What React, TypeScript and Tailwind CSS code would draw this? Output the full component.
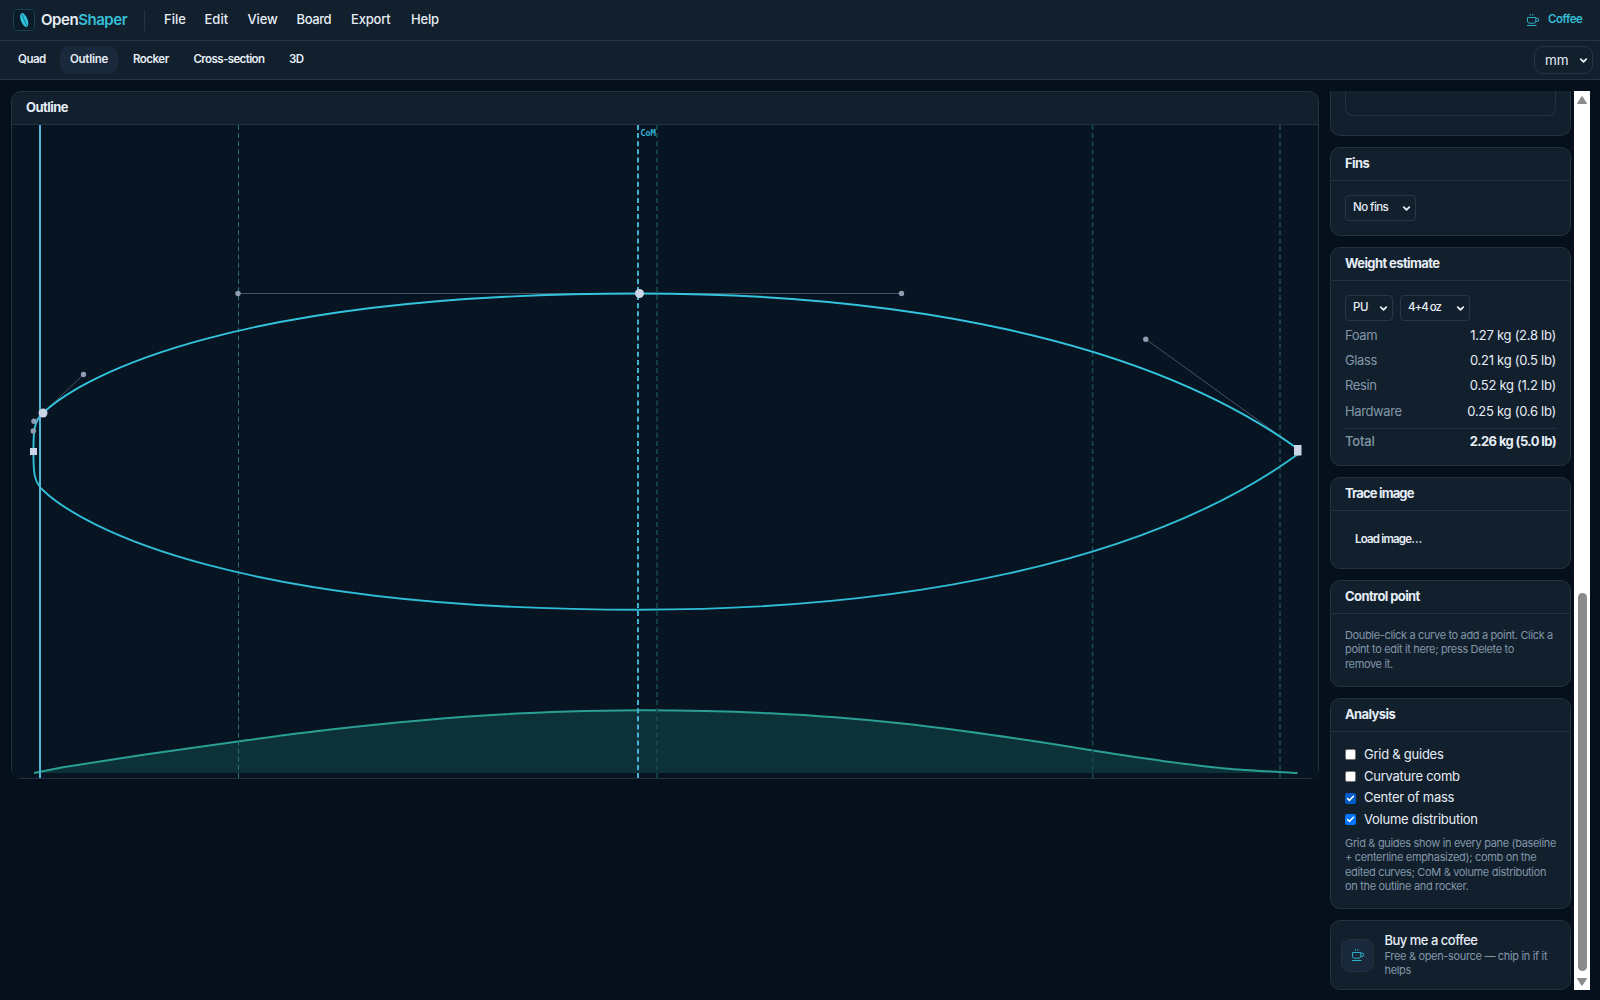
import { ReactNode } from "react";
import { ChevronDown, Check } from "lucide-react";

type Pt = [number, number];

const volume: Pt[] = [
  [34, 773], [63, 767.3], [147, 754.3], [238, 741.5], [316, 731.3], [400, 722.3], [484, 715.5],
  [568, 711.6], [640, 710.3], [705, 711], [770, 713.3], [835, 717.3], [900, 723.3], [965, 731.2],
  [1030, 740.5], [1092.7, 750.5], [1160, 760.6], [1225, 768.4], [1297.5, 773],
];

function smooth(p: Pt[]) {
  let d = `M${p[0][0]} ${p[0][1]}L${p[1][0]} ${p[1][1]}`;
  for (let i = 1; i < p.length - 1; i++) {
    const a = p[i - 1], b = p[i], c = p[i + 1], e = p[i + 2] ?? c;
    d += `C${b[0] + (c[0] - a[0]) / 6} ${b[1] + (c[1] - a[1]) / 6} ${c[0] - (e[0] - b[0]) / 6} ${c[1] - (e[1] - b[1]) / 6} ${c[0]} ${c[1]}`;
  }
  return d;
}

const volumeLine = smooth(volume);
const half = "M33.5 451.6C33.3 431 34 421 43 413C83.5 374.5 238 293.5 639.5 293.5C901.5 293.5 1145.8 339.2 1297.5 448.6";

function OutlineCanvas() {
  return (
    <svg className="block h-[653px] w-[1306px] bg-[#071421]" viewBox="12 125 1306 653" fill="none">
      <path d={volumeLine + "L34 773Z"} fill="#2dd4bf" fillOpacity="0.15" />
      <path d={volumeLine} stroke="#2a9f93" strokeWidth="2" />
      <g strokeDasharray="5 3.1">
        <path d="M238.5 125V778" stroke="#257375" />
        <path d="M657 125V778" strokeWidth="1.6" stroke="#174a4f" />
        <path d="M1092.6 125V778" strokeWidth="1.6" stroke="#174a4f" />
        <path d="M1280 125V778" strokeWidth="1.6" stroke="#1d4a51" />
      </g>
      <g stroke="#64748b" strokeOpacity="0.65">
        <path d="M238 293.5H901.5" />
        <path d="M43 413L83.5 374.5" />
        <path d="M34 421L43 413" />
        <path d="M33.5 451.6V431" />
        <path d="M1297.5 448.6L1145.8 339.2" />
      </g>
      <path d={half} stroke="#33c4de" strokeWidth="1.9" />
      <path d={half} stroke="#2fbdd6" strokeWidth="1.9" transform="matrix(1 0 0 -1 0 903.2)" />
      <path d="M40 125V778" stroke="#4fb5d2" strokeWidth="2" />
      <path d="M638 125V778" stroke="#45b3d0" strokeWidth="2" strokeDasharray="5 3.1" />
      <text x="640.3" y="136" fontSize="9" fill="#32b0cc" className="font-['DejaVu_Sans_Mono',monospace] font-bold" textLength="15.5">CoM</text>
      <g fill="#8e9db3">
        <circle cx="238" cy="293.5" r="2.7" />
        <circle cx="901.5" cy="293.5" r="2.7" />
        <circle cx="83.5" cy="374.5" r="2.7" />
        <circle cx="34" cy="421.3" r="2.7" />
        <circle cx="33.3" cy="431" r="2.7" />
        <circle cx="1145.8" cy="339.2" r="2.7" />
      </g>
      <g fill="#cbd5e5">
        <circle cx="43" cy="413" r="4.5" />
        <circle cx="639.5" cy="293.5" r="4.5" />
        <rect x="30" y="448" width="7" height="7" />
        <rect x="1294" y="445" width="7.5" height="10.5" />
      </g>
    </svg>
  );
}

function Logo() {
  return (
    <span className="flex size-[22px] items-center justify-center rounded-[5px] border border-[#15434e] bg-[#0b1b2a]">
      <svg width="16" height="16" viewBox="0 0 16 16">
        <ellipse cx="8.2" cy="8" rx="3.3" ry="7.3" fill="#2fc3dc" transform="rotate(-22 8.2 8)" />
        <path d="M5.8 2.2L10.8 14" stroke="#0b5a70" strokeWidth="0.8" />
      </svg>
    </span>
  );
}

function Cup() {
  return (
    <svg width="14" height="14" viewBox="0 0 14 14" fill="none" stroke="#2fafc6" strokeWidth="1">
      <path d="M1.5 4.5H9.8V8.2A2 2 0 0 1 7.8 10.2H3.5A2 2 0 0 1 1.5 8.2Z" />
      <path d="M9.8 5.2H11.2A1.5 1.5 0 0 1 11.2 8.4H9.8" />
      <path d="M1 12.5H10.5" />
      <path d="M4.3 1V2.6M6.8 1V2.6" />
    </svg>
  );
}

function Card({ title, className, tracking = "tracking-[-0.6px]", children }: { title: string; className: string; tracking?: string; children: ReactNode }) {
  return (
    <section className={"shrink-0 rounded-[10px] border border-[#22323f] bg-[#121f2d] " + className}>
      <h2 className={"flex h-[33px] items-center border-b border-[#22323f] px-[14px] text-[13px] font-bold text-[#e6edf5] " + tracking}>
        {title}
      </h2>
      <div className="px-[14px]">{children}</div>
    </section>
  );
}

function Select({ label, className }: { label: string; className: string }) {
  return (
    <button className={"flex items-center justify-between border border-[#263746] text-[#e6edf5] " + className}>
      <span>{label}</span>
      <ChevronDown size={11} strokeWidth={4} />
    </button>
  );
}

function Row({ k, v }: { k: string; v: string }) {
  return (
    <div className="flex h-[25.3px] items-center justify-between text-[13px]">
      <span className="tracking-[-0.4px] text-[#8197a8]">{k}</span>
      <span className="tracking-[-0.27px]">{v}</span>
    </div>
  );
}

function Box({ label, on, hover }: { label: string; on?: boolean; hover?: boolean }) {
  return (
    <label className="flex h-[21.7px] items-center gap-2 text-[13px] tracking-[-0.25px]">
      <span
        className={
          "flex size-[11px] items-center justify-center rounded-[2px] " +
          (on ? (hover ? "bg-[#005cc8]" : "bg-[#0075ff]") : "border border-[#767676] bg-white")
        }
      >
        {on && <Check size={9} strokeWidth={4} color="white" />}
      </span>
      {label}
    </label>
  );
}

export default function App() {
  return (
    <div className="flex h-[1000px] w-[1600px] flex-col overflow-hidden bg-[#06101c] font-[Inter,sans-serif] text-[13px] text-[#e6edf5]">
      <header className="flex h-[41px] shrink-0 items-center border-b border-[#253541] bg-[#121f2d] pl-[13px] pr-[18px]">
        <Logo />
        <span className="ml-[6px] w-[103px] whitespace-nowrap text-[15px] font-semibold tracking-[-0.45px]">
          Open<span className="text-[#35bfd6]">Shaper</span>
        </span>
        <span className="h-[21px] w-px bg-[#253541]" />
        <nav className="ml-[19px] flex flex-1 text-[13px] font-medium">
          <span className="w-[40.5px]">File</span>
          <span className="w-[43px]">Edit</span>
          <span className="w-[49px] tracking-[-0.1px]">View</span>
          <span className="w-[54.5px] tracking-[-0.4px]">Board</span>
          <span className="w-[60px] tracking-[-0.2px]">Export</span>
          <span className="tracking-[-0.2px]">Help</span>
        </nav>
        <span className="flex items-center gap-[8px] text-[11.5px] font-semibold tracking-[-0.5px] text-[#35bfd6]">
          <Cup />
          <span className="w-[34px] pb-px">Coffee</span>
        </span>
      </header>
      <div className="flex h-[39px] shrink-0 items-center border-b border-[#253541] bg-[#121f2d] pl-[18px] pr-[7px] text-[11.5px] font-semibold tracking-[-0.5px]">
        <span className="w-[42px]">Quad</span>
        <span className="mr-[15px] flex h-7 w-[58px] items-center justify-center rounded-[9px] bg-[#1a283b] tracking-[-0.25px]">Outline</span>
        <span className="w-[60.5px]">Rocker</span>
        <span className="w-[95.5px] tracking-[-0.6px]">Cross-section</span>
        <span className="flex-1">3D</span>
        <Select label="mm" className="h-7 w-[59px] rounded-[9px] pl-[10px] pr-[3px] text-[13.5px] font-normal tracking-[0px]" />
      </div>
      <main className="flex min-h-0 flex-1 pl-[11px] pr-[10px] pt-[11px]">
        <section className="h-[688px] w-[1308px] shrink-0 rounded-[10px] border border-[#22323f] bg-[#121f2d]">
          <h2 className="flex h-[33px] items-center border-b border-[#22323f] px-[14px] text-[13px] font-bold tracking-[-0.55px]">
            Outline
          </h2>
          <OutlineCanvas />
        </section>
        <aside className="ml-[11px] flex h-[899px] w-[242px] flex-col gap-[11px] overflow-hidden pr-px">
          <div className="h-[45px] shrink-0 rounded-b-[10px] border border-t-0 border-[#22323f] bg-[#121f2d] px-[14px]">
            <div className="h-[25px] rounded-b-[8px] border border-t-0 border-[#22323f]" />
          </div>
          <Card title="Fins" className="h-[89px]">
            <Select label="No fins" className="mt-[14px] h-[26px] w-[71px] rounded-[4px] pl-[7px] pr-[3px] text-[11.5px] font-medium tracking-[-0.55px]" />
          </Card>
          <Card title="Weight estimate" className="h-[219px]">
            <div className="mt-[14px] mb-[2px] flex gap-[7px]">
              <Select label="PU" className="h-[26px] w-[48px] rounded-[4px] pl-[7px] pr-[3px] text-[11.5px] font-medium tracking-[-0.4px]" />
              <Select label="4+4 oz" className="h-[26px] w-[70px] rounded-[4px] pl-[7px] pr-[3px] text-[11.5px] font-medium tracking-[-1px]" />
            </div>
            <Row k="Foam" v="1.27 kg (2.8 lb)" />
            <Row k="Glass" v="0.21 kg (0.5 lb)" />
            <Row k="Resin" v="0.52 kg (1.2 lb)" />
            <Row k="Hardware" v="0.25 kg (0.6 lb)" />
            <div className="mt-[4px] border-t border-[#22323f]">
              <div className="flex h-[25.3px] items-center justify-between">
                <span className="font-medium tracking-[-0.2px] text-[#8197a8]">Total</span>
                <span className="font-bold tracking-[-0.6px]">2.26 kg (5.0 lb)</span>
              </div>
            </div>
          </Card>
          <Card title="Trace image" className="h-[92px]" tracking="tracking-[-0.85px]">
            <button className="mt-[14px] flex h-7 items-center px-[10px] pt-px text-[11.5px] font-semibold tracking-[-0.8px]">Load image…</button>
          </Card>
          <Card title="Control point" className="h-[107px]">
            <p className="mt-[14px] whitespace-nowrap text-[11px] leading-[14.4px] tracking-[-0.35px] text-[#8197a8]">
              Double-click a curve to add a point. Click a<br />point to edit it here; press Delete to<br />remove it.
            </p>
          </Card>
          <Card title="Analysis" className="h-[211px]">
            <div className="mt-[12px]">
              <Box label="Grid & guides" />
              <Box label="Curvature comb" />
              <Box label="Center of mass" on hover />
              <Box label="Volume distribution" on />
            </div>
            <p className="mt-[5px] whitespace-nowrap text-[11px] leading-[14.4px] tracking-[-0.33px] text-[#8197a8]">
              Grid &amp; guides show in every pane (baseline<br />+ centerline emphasized); comb on the<br />edited curves; CoM &amp; volume distribution<br />on the outline and rocker.
            </p>
          </Card>
          <div className="flex h-[70px] shrink-0 items-center rounded-[10px] border border-[#22323f] bg-[#121f2d] pl-[10px]">
            <span className="flex size-[33px] items-center justify-center rounded-[9px] border border-[#22323f] bg-[#1a283b]">
              <Cup />
            </span>
            <div className="ml-[10.5px] pb-[3px]">
              <div className="text-[13px] font-medium leading-[18px] tracking-[-0.5px]">Buy me a coffee</div>
              <p className="whitespace-nowrap text-[11px] leading-[14px] tracking-[-0.33px] text-[#8197a8]">
                Free &amp; open-source — chip in if it<br />helps
              </p>
            </div>
          </div>
        </aside>
        <div className="ml-[2px] flex h-[899px] w-4 flex-col items-center bg-white">
          <svg className="mt-[5px] shrink-0" width="10" height="8" viewBox="0 0 10 8"><path d="M5 0.5L9.5 7.5H0.5Z" fill="#8b8b8b" stroke="#8b8b8b" strokeLinejoin="round" /></svg>
          <div className="mt-[489px] h-[378px] w-[9px] rounded-full bg-[#8b8b8b]" />
          <svg className="mt-[7px] shrink-0" width="10" height="8" viewBox="0 0 10 8"><path d="M5 7.5L9.5 0.5H0.5Z" fill="#8b8b8b" stroke="#8b8b8b" strokeLinejoin="round" /></svg>
        </div>
      </main>
    </div>
  );
}
